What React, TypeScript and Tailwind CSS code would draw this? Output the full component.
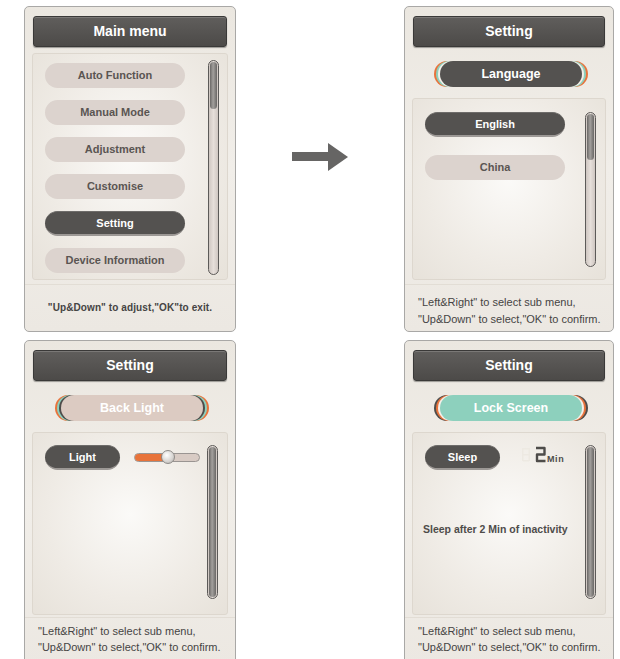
import type { ReactNode } from "react";

const FONT = { fontFamily: '"Liberation Sans", Arial, sans-serif' };

function Header({ title }: { title: string }) {
  return (
    <div className="shrink-0 mx-[8px] h-[31px] rounded-[3px] border border-[#3a3938] bg-[linear-gradient(#605e5c,#545250_60%,#4c4a48)] shadow-[inset_0_1px_0_#7a7876,0_1px_1px_rgba(0,0,0,0.35)] flex items-center justify-center text-white font-bold text-[14px]">
      {title}
    </div>
  );
}

function Pill({ label, dark, w = "w-[140px]" }: { label: string; dark?: boolean; w?: string }) {
  return (
    <div
      className={`${w} h-[25px] rounded-full flex items-center justify-center font-bold text-[11px] ${
        dark
          ? "bg-[#545250] text-white border-t border-[#6e6c6a] border-b-[2px] border-b-[#9c9895]"
          : "bg-[#dcd3ce] text-[#5a5552]"
      }`}
    >
      {label}
    </div>
  );
}

function Scrollbar({ h, thumb }: { h: string; thumb: string }) {
  return (
    <div className={`${h} w-[11px] rounded-full border border-[#5c5a58] bg-[linear-gradient(90deg,#cfc7c2,#e6dfda_50%,#cfc7c2)] p-[1px] flex flex-col`}>
      <div className={`${thumb} w-full rounded-full bg-[linear-gradient(90deg,#6a6866,#a3a09d_45%,#6a6866)]`} />
    </div>
  );
}

function Box({ children, h }: { children: ReactNode; h: string }) {
  return (
    <div className={`shrink-0 mx-[7px] ${h} rounded-[3px] border border-[#ddd7ce] bg-[radial-gradient(ellipse_at_50%_45%,#fbfaf8,#efebe5_60%,#e7e2da)] relative`}>
      {children}
    </div>
  );
}

function Footer2({ bottom }: { bottom?: boolean }) {
  return (
    <div
      className={`shrink-0 border-t border-[#e2ddd5] pl-[13px] whitespace-nowrap text-[11px] text-[#454443] ${
        bottom ? "mt-[2px] pt-[5px] leading-[16px]" : "mt-[4px] pt-[9px] leading-[17px]"
      }`}
    >
      <div>"Left&amp;Right" to select sub menu,</div>
      <div>"Up&amp;Down" to select,"OK" to confirm.</div>
    </div>
  );
}

function Panel({ children }: { children: ReactNode }) {
  return (
    <div className="h-[326px] overflow-hidden rounded-[5px] border border-[#a9a8a6] bg-[linear-gradient(#ebe7e0,#f1eee9_50%,#ece8e2)] pt-[9px] flex flex-col">
      {children}
    </div>
  );
}

function SubPill({ label, variant }: { label: string; variant: "lang" | "light" | "lock" }) {
  const body =
    variant === "lang"
      ? "bg-[#545250] text-white"
      : variant === "light"
      ? "bg-[#dccbc2] text-white"
      : "bg-[#8dd0bd] text-white";
  const ring =
    variant === "lock"
      ? "shadow-[-2px_0_0_#f3efe9,-4px_0_0_#e8733c,-6px_0_0_#4e4c4a,2px_0_0_#f3efe9,4px_0_0_#e8733c,6px_0_0_#4e4c4a]"
      : variant === "light"
      ? "shadow-[-2px_0_0_#4e4c4a,-4px_0_0_#8dd0bd,-6px_0_0_#e8733c,2px_0_0_#4e4c4a,4px_0_0_#8dd0bd,6px_0_0_#e8733c]"
      : "shadow-[-2px_0_0_#f3efe9,-4px_0_0_#8dd0bd,-6px_0_0_#e8733c,2px_0_0_#f3efe9,4px_0_0_#8dd0bd,6px_0_0_#e8733c]";
  return (
    <div className="shrink-0 mt-[14px] flex justify-center pl-[4px]">
      <div className={`w-[142px] h-[26px] rounded-full flex items-center justify-center font-bold text-[12.5px] ${body} ${ring}`}>
        {label}
      </div>
    </div>
  );
}

function Digit2() {
  return (
    <svg width="32" height="17" viewBox="0 0 32 17">
      {/* ghost 8 */}
      <g fill="#ede9e2">
        <rect x="3" y="2" width="6" height="1.5" />
        <rect x="3" y="8" width="6" height="1.5" />
        <rect x="3" y="14" width="6" height="1.5" />
        <rect x="2" y="2" width="1.5" height="13" />
        <rect x="8.5" y="2" width="1.5" height="13" />
      </g>
      <path d="M16 2 H24.5 V8.5 H17 V15 H25.5" fill="none" stroke="#4e4c4a" strokeWidth="2.4" strokeLinejoin="round" />
    </svg>
  );
}

export default function App() {
  const menu = ["Auto Function", "Manual Mode", "Adjustment", "Customise", "Setting", "Device Information"];

  return (
    <div style={FONT} className="w-[620px] h-[659px] overflow-hidden bg-white pl-[24px] pt-[6px] grid grid-cols-[212px_168px_210px] grid-rows-[326px_326px] gap-y-[8px]">
      {/* Main menu */}
      <Panel>
        <Header title="Main menu" />
        <div className="mt-[6px]">
          <Box h="h-[227px]">
            <div className="flex justify-between pl-[12px] pr-[8px] pt-[6px]">
              <div className="flex flex-col gap-[12px] pt-[3px]">
                {menu.map((m) => (
                  <Pill key={m} label={m} dark={m === "Setting"} />
                ))}
              </div>
              <Scrollbar h="h-[215px]" thumb="h-[47px]" />
            </div>
          </Box>
        </div>
        <div className="border-t border-[#e2ddd5] mt-[4px] pt-[15px] text-center whitespace-nowrap font-bold text-[10px] text-[#454443] tracking-[0.1px]">
          "Up&amp;Down" to adjust,"OK"to exit.
        </div>
      </Panel>

      {/* Arrow */}
      <div className="pt-[137px] pl-[56px]">
        <svg width="56" height="28" viewBox="0 0 56 28">
          <rect x="0" y="9" width="37" height="9" fill="#666564" />
          <polygon points="36,0 56,14 36,28" fill="#666564" />
        </svg>
      </div>

      {/* Language */}
      <Panel>
        <Header title="Setting" />
        <SubPill label="Language" variant="lang" />
        <div className="mt-[11px]">
          <Box h="h-[182px]">
            <div className="flex justify-between pl-[12px] pr-[9px] pt-[13px]">
              <div className="flex flex-col gap-[18px]">
                <Pill label="English" dark />
                <Pill label="China" />
              </div>
              <Scrollbar h="h-[155px]" thumb="h-[46px]" />
            </div>
          </Box>
        </div>
        <Footer2 />
      </Panel>

      {/* Back Light */}
      <Panel>
        <Header title="Setting" />
        <SubPill label="Back Light" variant="light" />
        <div className="mt-[11px]">
          <Box h="h-[183px]">
            <div className="flex justify-between pl-[12px] pr-[9px] pt-[12px]">
              <div className="flex items-start gap-[14px]">
                <Pill label="Light" dark w="w-[75px]" />
                <div className="mt-[8px] relative w-[66px] h-[9px] rounded-full border border-[#9a9592] bg-[#d8cbc4] overflow-visible">
                  <div className="w-[32px] h-full rounded-l-full bg-[#e8733a]" />
                  <div className="absolute left-[26px] top-[-4px] w-[14px] h-[14px] rounded-full border border-[#8e8b88] bg-[radial-gradient(circle_at_40%_35%,#ffffff,#d6d3d0_60%,#a9a6a3)]" />
                </div>
              </div>
              <Scrollbar h="h-[154px]" thumb="flex-1" />
            </div>
          </Box>
        </div>
        <Footer2 bottom />
      </Panel>

      <div />

      {/* Lock Screen */}
      <Panel>
        <Header title="Setting" />
        <SubPill label="Lock Screen" variant="lock" />
        <div className="mt-[11px]">
          <Box h="h-[183px]">
            <div className="flex justify-between pl-[12px] pr-[9px] pt-[12px]">
              <div className="flex flex-col">
                <div className="flex items-start gap-[20px]">
                  <Pill label="Sleep" dark w="w-[75px]" />
                  <div className="flex items-end mt-[1px]">
                    <Digit2 />
                    <span className="text-[9px] font-bold text-[#4e4c4a] ml-[-5px] mb-[-3px] tracking-[0.6px]">Min</span>
                  </div>
                </div>
                <div className="mt-[52px] ml-[-2px] font-bold text-[10.5px] text-[#4e4c4a] whitespace-nowrap">
                  Sleep after 2 Min of inactivity
                </div>
              </div>
              <Scrollbar h="h-[154px]" thumb="flex-1" />
            </div>
          </Box>
        </div>
        <Footer2 bottom />
      </Panel>
    </div>
  );
}
